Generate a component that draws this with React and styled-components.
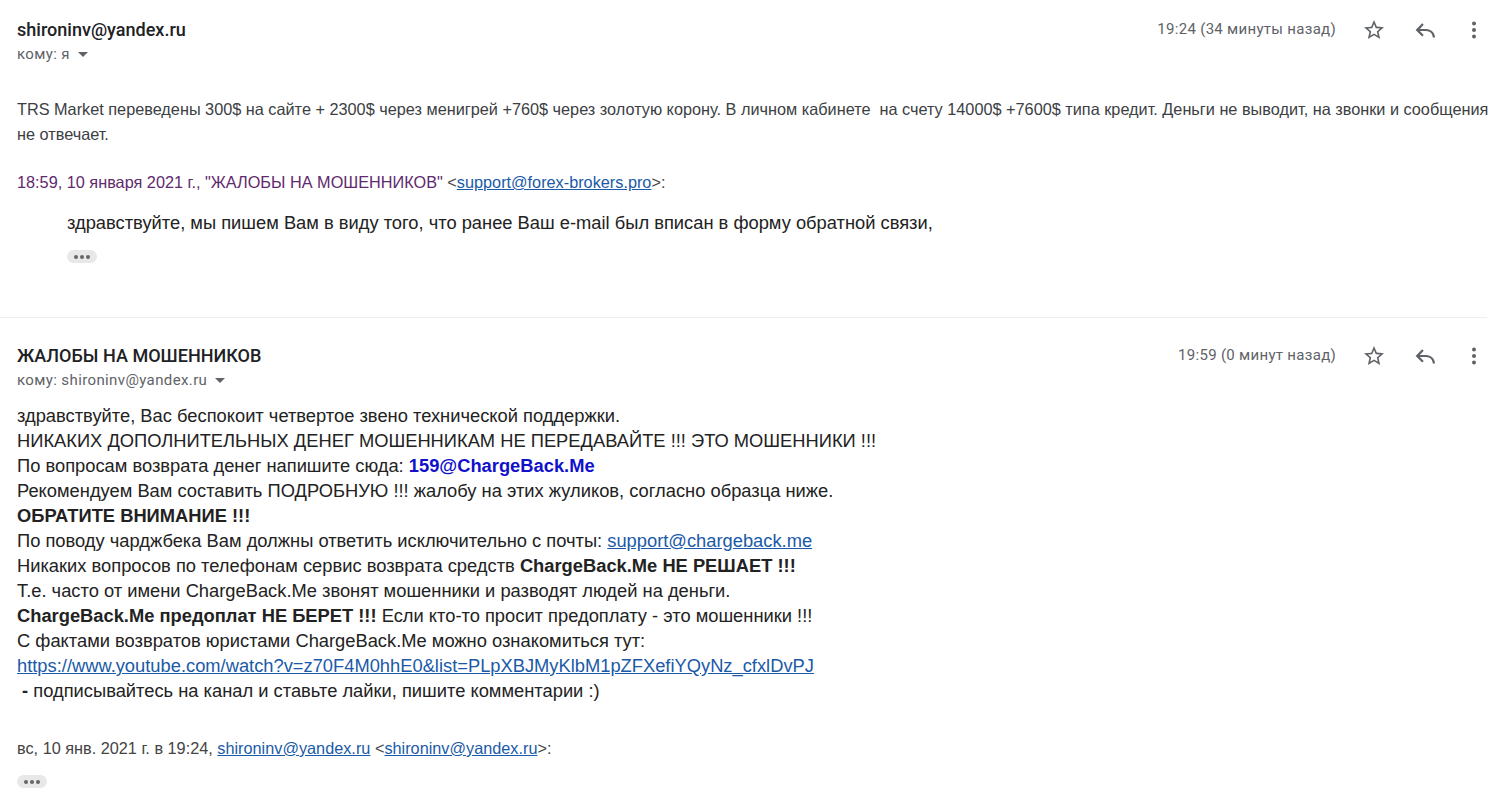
import styled, { createGlobalStyle } from "styled-components";

const Global = createGlobalStyle`
  html, body {
    margin: 0;
    padding: 0;
    background: #fff;
    overflow: hidden;
  }
`;

const Page = styled.div`
  width: 1504px;
  height: 794px;
  overflow: hidden;
  font-family: "Liberation Sans", Arial, sans-serif;
  color: #222;
`;

const Message = styled.section`
  width: 1487px;
  padding: ${(p) => p.$top}px 0 0 17px;
  height: ${(p) => p.$height}px;
  box-sizing: border-box;
  border-bottom: ${(p) => (p.$divider ? "1px solid #efefef" : "none")};
`;

const Head = styled.header`
  display: flex;
  justify-content: space-between;
  align-items: flex-start;
`;

const Sender = styled.div`
  font: 500 18.05px/20px Roboto, sans-serif;
  color: #202124;
`;

const Recipient = styled.div`
  display: flex;
  align-items: center;
  gap: 7px;
  margin-top: 5px;
  font: 400 15px/18px Roboto, sans-serif;
  letter-spacing: 0.38px;
  color: #5f6368;
`;

const Caret = styled.span`
  width: 0;
  height: 0;
  margin-left: 1px;
  border-left: 5px solid transparent;
  border-right: 5px solid transparent;
  border-top: 5px solid #5f6368;
`;

const Meta = styled.div`
  display: flex;
  align-items: center;
  height: 20px;
  padding-right: 1px;
`;

const Time = styled.span`
  font: 400 15px/20px Roboto, sans-serif;
  letter-spacing: 0.3px;
  color: #5f6368;
  margin: 0 26px 2px 0;
`;

const Action = styled.span`
  display: flex;
  width: 24px;
  height: 24px;
  margin-left: ${(p) => p.$gap || 0}px;
`;

const Icon = styled.svg`
  width: 24px;
  height: 24px;
  fill: #5f6368;
`;

const Intro = styled.p`
  margin: 34px 0 0;
  width: 1475px;
  font-size: 16.27px;
  line-height: 25px;
  color: #3c4043;
`;

const QuoteHead = styled.p`
  margin: 23px 0 0;
  font-size: 16.27px;
  line-height: 25px;
  color: ${(p) => p.$color};
`;

const Plain = styled.span`
  color: #444;
`;

const Link = styled.a`
  color: #1a5aa8;
  text-decoration: underline;
`;

const Quote = styled.p`
  margin: 15px 0 0 50px;
  font-size: 18.32px;
  line-height: 25px;
  color: #222;
`;

const More = styled.div`
  display: flex;
  align-items: center;
  justify-content: center;
  gap: 2px;
  width: 30px;
  height: 13px;
  border-radius: 7px;
  background: #e8e8e8;
  margin: ${(p) => p.$margin};
`;

const Dot = styled.i`
  width: 4px;
  height: 4px;
  border-radius: 50%;
  background: #666;
`;

const Body = styled.div`
  margin-top: 14px;
  font-size: 18.32px;
  line-height: 25px;
  color: #222;
`;

const Line = styled.div`
  white-space: pre;
`;

const BlueLink = styled.b`
  color: #1111cc;
`;

const Footer = styled.p`
  margin: 33px 0 0;
  font-size: 16.27px;
  line-height: 25px;
  color: #444;
`;

const Star = () => (
  <Icon viewBox="0 0 24 24">
    <path d="M22 9.24l-7.19-.62L12 2 9.19 8.63 2 9.24l5.46 4.73L5.82 21 12 17.27 18.18 21l-1.63-7.03L22 9.24zM12 15.4l-3.76 2.27 1-4.28-3.32-2.88 4.38-.38L12 6.1l1.71 4.04 4.38.38-3.32 2.88 1 4.28L12 15.4z" />
  </Icon>
);

const Reply = () => (
  <Icon viewBox="0 0 24 24">
    <path d="M22 19.5h-2.2c0-3.7-3-6.5-6.6-6.5H6.8l3.9 3.9-1.5 1.6-6.6-6.6 6.6-6.6 1.5 1.5-3.9 4.1h6.4c4.8 0 8.8 3.8 8.8 8.6z" />
  </Icon>
);

const Kebab = () => (
  <Icon viewBox="0 0 24 24">
    <circle cx="12" cy="5.5" r="2" />
    <circle cx="12" cy="12" r="2" />
    <circle cx="12" cy="18.5" r="2" />
  </Icon>
);

const Actions = ({ time }) => (
  <Meta>
    <Time>{time}</Time>
    <Action><Star /></Action>
    <Action $gap={27}><Reply /></Action>
    <Action $gap={25}><Kebab /></Action>
  </Meta>
);

const Dots = ({ margin }) => (
  <More $margin={margin}>
    <Dot />
    <Dot />
    <Dot />
  </More>
);

export default function App() {
  return (
    <Page>
      <Global />
      <Message $top={20} $height={318} $divider>
        <Head>
          <div>
            <Sender>shironinv@yandex.ru</Sender>
            <Recipient>
              кому: я <Caret />
            </Recipient>
          </div>
          <Actions time="19:24 (34 минуты назад)" />
        </Head>
        <Intro>
          TRS Market переведены 300$ на сайте + 2300$ через менигрей +760$ через золотую корону. В личном кабинете&nbsp; на счету 14000$ +7600$ типа кредит. Деньги не выводит, на звонки и сообщения не отвечает.
        </Intro>
        <QuoteHead $color="#5f2a6e">
          18:59, 10 января 2021 г., "ЖАЛОБЫ НА МОШЕННИКОВ" <Plain>&lt;</Plain>
          <Link>support@forex-brokers.pro</Link>
          <Plain>&gt;:</Plain>
        </QuoteHead>
        <Quote>здравствуйте, мы пишем Вам в виду того, что ранее Ваш e-mail был вписан в форму обратной связи,</Quote>
        <Dots margin="15px 0 0 50px" />
      </Message>
      <Message $top={28} $height={476}>
        <Head>
          <div>
            <Sender>ЖАЛОБЫ НА МОШЕННИКОВ</Sender>
            <Recipient>
              кому: shironinv@yandex.ru <Caret />
            </Recipient>
          </div>
          <Actions time="19:59 (0 минут назад)" />
        </Head>
        <Body>
          <Line>здравствуйте, Вас беспокоит четвертое звено технической поддержки.</Line>
          <Line>НИКАКИХ ДОПОЛНИТЕЛЬНЫХ ДЕНЕГ МОШЕННИКАМ НЕ ПЕРЕДАВАЙТЕ !!! ЭТО МОШЕННИКИ !!!</Line>
          <Line>По вопросам возврата денег напишите сюда: <BlueLink>159@ChargeBack.Me</BlueLink></Line>
          <Line>Рекомендуем Вам составить ПОДРОБНУЮ !!! жалобу на этих жуликов, согласно образца ниже.</Line>
          <Line><b>ОБРАТИТЕ ВНИМАНИЕ !!!</b></Line>
          <Line>По поводу чарджбека Вам должны ответить исключительно с почты: <Link>support@chargeback.me</Link></Line>
          <Line>Никаких вопросов по телефонам сервис возврата средств <b>ChargeBack.Me НЕ РЕШАЕТ !!!</b></Line>
          <Line>Т.е. часто от имени ChargeBack.Me звонят мошенники и разводят людей на деньги.</Line>
          <Line><b>ChargeBack.Me предоплат НЕ БЕРЕТ !!!</b> Если кто-то просит предоплату - это мошенники !!!</Line>
          <Line>С фактами возвратов юристами ChargeBack.Me можно ознакомиться тут:</Line>
          <Line><Link>https://www.youtube.com/watch?v=z70F4M0hhE0&amp;list=PLpXBJMyKlbM1pZFXefiYQyNz_cfxlDvPJ</Link></Line>
          <Line> <b>-</b> подписывайтесь на канал и ставьте лайки, пишите комментарии :)</Line>
        </Body>
        <Footer>
          вс, 10 янв. 2021 г. в 19:24, <Link>shironinv@yandex.ru</Link> &lt;<Link>shironinv@yandex.ru</Link>&gt;:
        </Footer>
        <Dots margin="14px 0 0" />
      </Message>
    </Page>
  );
}
